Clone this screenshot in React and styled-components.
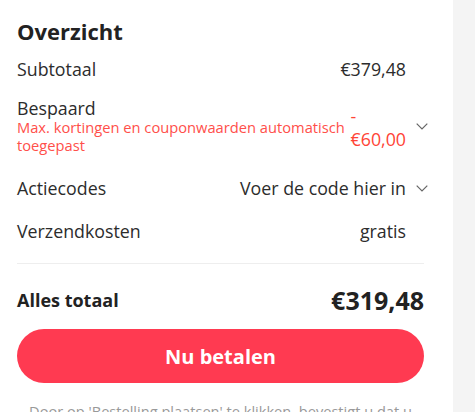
import React from "react";
import styled, { createGlobalStyle } from "styled-components";

const Global = createGlobalStyle`
  html, body { margin: 0; padding: 0; background: #f4f4f4; }
  body { font-family: "Open Sans", "Liberation Sans", sans-serif; }
`;

const Panel = styled.div`
  width: 453px;
  min-height: 412px;
  box-sizing: border-box;
  background: #fff;
  padding: 16px 29px 0 17px;
  overflow: hidden;
`;

const Title = styled.h2`
  margin: 0;
  font-size: 22px;
  line-height: 30px;
  font-weight: 700;
  color: #222;
`;

const Row = styled.div`
  display: flex;
  align-items: center;
  margin-top: ${(p) => p.$top}px;
  font-size: 17.8px;
  line-height: 20px;
  color: #2c2c2c;
`;

const Left = styled.div`
  flex: 1;
  min-width: 0;
`;

const Label = styled.div``;

const Tip = styled.div`
  font-size: 14.7px;
  line-height: 18px;
  color: #ff4f4a;
`;

const Value = styled.div`
  color: ${(p) => (p.$red ? "#ff4436" : "#2c2c2c")};
  line-height: ${(p) => (p.$stack ? "23px" : "20px")};
  margin-top: ${(p) => (p.$stack ? "3px" : "0")};
  white-space: nowrap;
`;

const Slot = styled.div`
  width: 18px;
  flex: none;
  display: flex;
  align-items: center;
`;

const Chevron = styled.svg`
  margin-left: 10px;
  width: 12px;
  height: 7px;
  overflow: visible;
  flex: none;
`;

const Divider = styled.div`
  height: 1px;
  background: #eee;
  margin-top: 22px;
`;

const TotalRow = styled.div`
  display: flex;
  align-items: center;
  justify-content: space-between;
  margin-top: 20px;
  color: #222;
  font-weight: 700;
`;

const TotalLabel = styled.div`
  font-size: 18px;
  line-height: 32px;
`;

const TotalValue = styled.div`
  font-size: 25px;
  line-height: 32px;
`;

const PayButton = styled.button`
  display: block;
  width: 100%;
  height: 54px;
  margin-top: 13px;
  border: none;
  border-radius: 27px;
  background: #ff3a51;
  color: #fff;
  font-family: inherit;
  font-size: 20px;
  font-weight: 700;
  cursor: pointer;
`;

const Legal = styled.p`
  margin: 18px 0 0;
  font-size: 14.6px;
  line-height: 20px;
  color: #999;
  text-align: center;
`;

const Arrow = () => (
  <Slot>
    <Chevron viewBox="0 0 12 7">
      <path d="M0.7 0.7 L6 6 L11.3 0.7" fill="none" stroke="#666" strokeWidth="1.2" />
    </Chevron>
  </Slot>
);

const Empty = () => <Slot />;

export default function App() {
  return (
    <>
      <Global />
      <Panel>
        <Title>Overzicht</Title>
        <Row $top={13}>
          <Left>
            <Label>Subtotaal</Label>
          </Left>
          <Value>€379,48</Value>
          <Empty />
        </Row>
        <Row $top={19}>
          <Left>
            <Label>Bespaard</Label>
            <Tip>
              Max. kortingen en couponwaarden automatisch
              <br />
              toegepast
            </Tip>
          </Left>
          <Value $red $stack>
            -
            <br />
            €60,00
          </Value>
          <Arrow />
        </Row>
        <Row $top={24}>
          <Left>
            <Label>Actiecodes</Label>
          </Left>
          <Value>Voer de code hier in</Value>
          <Arrow />
        </Row>
        <Row $top={23}>
          <Left>
            <Label>Verzendkosten</Label>
          </Left>
          <Value>gratis</Value>
          <Empty />
        </Row>
        <Divider />
        <TotalRow>
          <TotalLabel>Alles totaal</TotalLabel>
          <TotalValue>€319,48</TotalValue>
        </TotalRow>
        <PayButton>Nu betalen</PayButton>
        <Legal>Door op 'Bestelling plaatsen' te klikken, bevestigt u dat u akkoord gaat met de voorwaarden.</Legal>
      </Panel>
    </>
  );
}
